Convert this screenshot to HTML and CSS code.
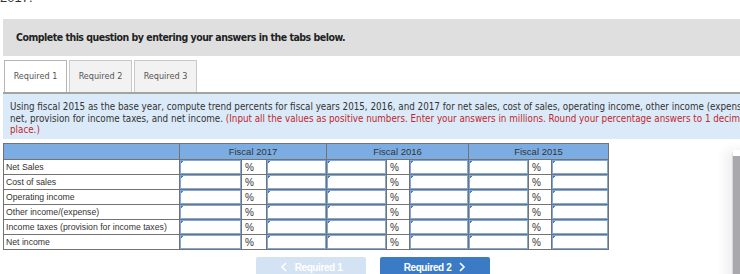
FILE: index.html
```html
<!DOCTYPE html>
<html lang="en">
<head>
    <meta charset="UTF-8">
    <title>Required 1</title>
    <link rel="stylesheet" href="styles.css">
</head>
<body>
    <div class="page">
        <p class="lead">2017.</p>
        <div class="banner">Complete this question by entering your answers in the tabs below.</div>

        <div class="tabs">
            <div class="tab active">Required 1</div>
            <div class="tab">Required 2</div>
            <div class="tab">Required 3</div>
        </div>

        <div class="info">
            Using fiscal 2015 as the base year, compute trend percents for fiscal years 2015, 2016, and 2017 for net sales, cost of sales, operating income, other income (expense),<br>
            net, provision for income taxes, and net income. <span class="red">(Input all the values as positive numbers. Enter your answers in millions. Round your percentage answers to 1 decimal<br>
            place.)</span>
        </div>

        <table class="grid">
            <colgroup>
                <col style="width: 176px">
                <col style="width: 62px"><col style="width: 25px"><col style="width: 60px">
                <col style="width: 60px"><col style="width: 23px"><col style="width: 59px">
                <col style="width: 60px"><col style="width: 23px"><col style="width: 57px">
            </colgroup>
            <tr class="head">
                <th></th>
                <th colspan="3">Fiscal 2017</th>
                <th colspan="3">Fiscal 2016</th>
                <th colspan="3">Fiscal 2015</th>
            </tr>
            <tr>
                <td class="label">Net Sales</td>
                <td><input type="text"></td><td class="pct">%</td><td><input type="text"></td>
                <td><input type="text"></td><td class="pct">%</td><td><input type="text"></td>
                <td><input type="text"></td><td class="pct">%</td><td><input type="text"></td>
            </tr>
            <tr>
                <td class="label">Cost of sales</td>
                <td><input type="text"></td><td class="pct">%</td><td><input type="text"></td>
                <td><input type="text"></td><td class="pct">%</td><td><input type="text"></td>
                <td><input type="text"></td><td class="pct">%</td><td><input type="text"></td>
            </tr>
            <tr>
                <td class="label">Operating income</td>
                <td><input type="text"></td><td class="pct">%</td><td><input type="text"></td>
                <td><input type="text"></td><td class="pct">%</td><td><input type="text"></td>
                <td><input type="text"></td><td class="pct">%</td><td><input type="text"></td>
            </tr>
            <tr>
                <td class="label">Other income/(expense)</td>
                <td><input type="text"></td><td class="pct">%</td><td><input type="text"></td>
                <td><input type="text"></td><td class="pct">%</td><td><input type="text"></td>
                <td><input type="text"></td><td class="pct">%</td><td><input type="text"></td>
            </tr>
            <tr>
                <td class="label">Income taxes (provision for income taxes)</td>
                <td><input type="text"></td><td class="pct">%</td><td><input type="text"></td>
                <td><input type="text"></td><td class="pct">%</td><td><input type="text"></td>
                <td><input type="text"></td><td class="pct">%</td><td><input type="text"></td>
            </tr>
            <tr>
                <td class="label">Net income</td>
                <td><input type="text"></td><td class="pct">%</td><td><input type="text"></td>
                <td><input type="text"></td><td class="pct">%</td><td><input type="text"></td>
                <td><input type="text"></td><td class="pct">%</td><td><input type="text"></td>
            </tr>
        </table>

        <div class="nav">
            <button class="nav-btn prev" type="button" disabled>
                <svg width="8" height="10" viewBox="0 0 8 10"><polyline points="6,1 2,5 6,9" fill="none" stroke="#fff" stroke-width="1.6"/></svg>
                Required 1
            </button>
            <button class="nav-btn next" type="button">
                Required 2
                <svg width="8" height="10" viewBox="0 0 8 10"><polyline points="2,1 6,5 2,9" fill="none" stroke="#fff" stroke-width="1.6"/></svg>
            </button>
        </div>
    </div>

    <div class="side"></div>
</body>
</html>
```

FILE: styles.css
```css
body {
    margin: 0;
    overflow: hidden;
    font-family: "DejaVu Sans Condensed", "DejaVu Sans", Verdana, sans-serif;
    background: #fff;
    color: #222;
}

.page {
    width: 740px;
    padding-left: 3px;
}

.lead {
    margin: -10px 0 0 -3px;
    font: 13px/15px "Liberation Sans", Arial, sans-serif;
    color: #333;
}

.banner {
    margin-top: 14px;
    height: 37px;
    line-height: 37px;
    padding-left: 13px;
    background-color: #dfdfdf;
    font-size: 10.5px;
    font-weight: bold;
    letter-spacing: -0.5px;
    color: #222;
}

.tabs {
    display: flex;
    gap: 2px;
    margin-top: 4px;
    padding-left: 1px;
    border-bottom: 2px solid #a3a3a0;
}

.tab {
    width: 61px;
    height: 31px;
    line-height: 31px;
    text-align: center;
    border: 1px solid #c9c9c9;
    border-bottom: none;
    background-color: #f2f2f2;
    font-size: 9px;
    color: #555;
}

.tab.active {
    background-color: #fff;
    border-color: #b5b5b5;
}

.info {
    height: 45px;
    padding: 7px 0 0 7px;
    box-sizing: border-box;
    background-color: #dbeaf8;
    font-size: 9.75px;
    line-height: 11.5px;
    color: #333;
    white-space: nowrap;
}

.red {
    color: #c1272d;
}

.grid {
    margin-top: 4px;
    width: 606px;
    table-layout: fixed;
    border-collapse: collapse;
    font-family: "Liberation Sans", Arial, sans-serif;
    font-size: 8.7px;
    color: #333;
}

.grid th,
.grid td {
    border: 1px solid #737373;
    padding: 0;
    height: 14px;
}

.grid .head th {
    height: 15px;
    background-color: #7badE2;
    font-weight: normal;
    font-size: 9.5px;
    color: #333;
}

.grid .label {
    padding-left: 2px;
    white-space: nowrap;
    overflow: hidden;
}

.grid .pct {
    padding-left: 3px;
    font-size: 10px;
    background-color: #fff;
}

.grid input {
    display: block;
    width: 100%;
    height: 14px;
    margin: 0;
    padding: 0;
    box-sizing: border-box;
    border: 1px solid #80a8dd;
    background: linear-gradient(135deg, #3c7fd6 2px, transparent 2px) no-repeat, #fff;
}

.nav {
    display: flex;
    justify-content: center;
    gap: 14px;
    margin-top: 7px;
}

.nav-btn {
    display: flex;
    align-items: center;
    justify-content: center;
    gap: 7px;
    width: 110px;
    height: 20px;
    padding: 0;
    border: none;
    border-radius: 2px;
    font-family: "Liberation Sans", Arial, sans-serif;
    font-size: 10px;
    font-weight: bold;
    letter-spacing: -0.4px;
    color: #fff;
    cursor: pointer;
}

.nav-btn.prev {
    background-color: #d4e3f4;
}

.nav-btn.next {
    background-color: #3b7bc6;
}

.side {
    position: absolute;
    left: 732px;
    top: 150px;
    width: 30px;
    height: 140px;
    border-left: 1px solid #d8d8d8;
    border-top: 6px solid #fff;
    background-color: #a9a9ad;
    box-shadow: -6px 0 12px rgba(0, 0, 0, 0.07);
}
```
